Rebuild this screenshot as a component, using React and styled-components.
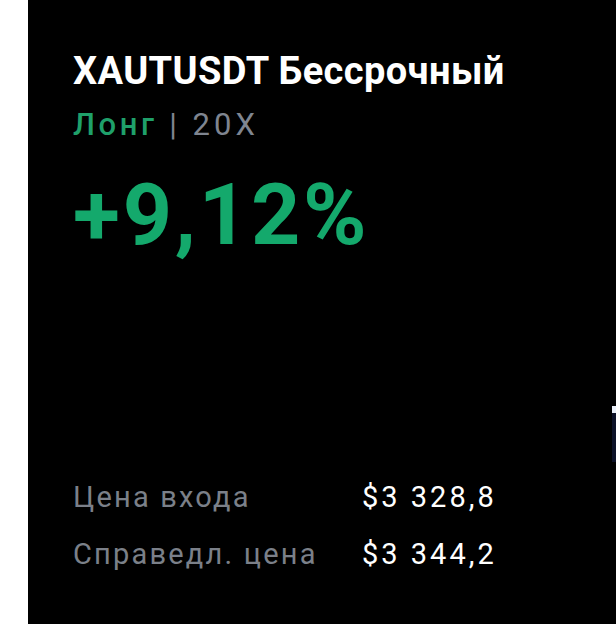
import React from "react";
import styled, { createGlobalStyle } from "styled-components";

const GlobalStyle = createGlobalStyle`
  html, body {
    margin: 0;
    padding: 0;
    background: #ffffff;
  }
  body {
    font-family: Roboto, "Noto Sans", sans-serif;
  }
`;

const Page = styled.div`
  display: flex;
  width: 616px;
  height: 624px;
  overflow: hidden;
`;

const Gutter = styled.div`
  width: 28px;
  flex-shrink: 0;
  background: #ffffff;
`;

const Card = styled.div`
  position: relative;
  flex: 1;
  background: #000000;
  padding: 49px 0 0 45px;
  display: flex;
  flex-direction: column;
`;

const Title = styled.div`
  color: #ffffff;
  font-size: 38px;
  font-weight: 700;
  line-height: 44px;
  letter-spacing: 0.4px;
`;

const Meta = styled.div`
  margin-top: 12px;
  font-size: 31px;
  line-height: 40px;
  letter-spacing: 4px;
  color: #7f8590;
`;

const Side = styled.span`
  color: #1fa06a;
  font-weight: 500;
  letter-spacing: 3.6px;
`;

const Pnl = styled.div`
  margin-top: 20px;
  color: #14a96c;
  font-size: 86px;
  font-weight: 700;
  line-height: 100px;
  letter-spacing: 2.8px;
`;

const Rows = styled.div`
  margin-top: 212px;
  display: grid;
  grid-template-columns: 289px auto;
  row-gap: 17px;
`;

const Label = styled.div`
  color: #7b8089;
  font-size: 29px;
  line-height: 40px;
  letter-spacing: 2.2px;
`;

const Value = styled.div`
  color: #ffffff;
  font-size: 29px;
  line-height: 40px;
  letter-spacing: 3px;
`;

const EdgeMark = styled.div`
  position: absolute;
  right: 0;
  top: 406px;
  width: 4px;
  height: 56px;
  background: linear-gradient(#e8eef8 0 7px, #0b1026 7px);
`;

const rows = [
  { label: "Цена входа", value: "$3 328,8" },
  { label: "Справедл. цена", value: "$3 344,2" },
];

export default function App() {
  return (
    <Page>
      <GlobalStyle />
      <Gutter />
      <Card>
        <Title>XAUTUSDT Бессрочный</Title>
        <Meta>
          <Side>Лонг</Side> | 20X
        </Meta>
        <Pnl>+9,12%</Pnl>
        <Rows>
          {rows.map(r => (
            <React.Fragment key={r.label}>
              <Label>{r.label}</Label>
              <Value>{r.value}</Value>
            </React.Fragment>
          ))}
        </Rows>
        <EdgeMark />
      </Card>
    </Page>
  );
}
